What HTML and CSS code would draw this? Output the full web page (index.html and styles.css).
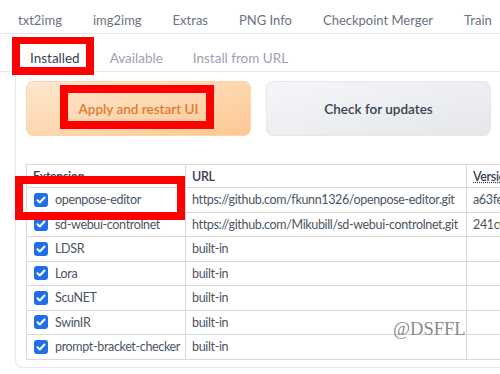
FILE: index.html
```html
<!DOCTYPE html>
<html lang="en">
<head>
    <meta charset="UTF-8">
    <meta name="viewport" content="width=device-width, initial-scale=1.0">
    <title>Extensions</title>
    <link rel="stylesheet" href="styles.css">
</head>
<body>
    <div class="top-tabs">
        <span>txt2img</span>
        <span>img2img</span>
        <span>Extras</span>
        <span>PNG Info</span>
        <span>Checkpoint Merger</span>
        <span>Train</span>
    </div>
    <div class="sub-tabs">
        <span class="tab selected">Installed</span>
        <span class="tab">Available</span>
        <span class="tab">Install from URL</span>
    </div>
    <div class="panel">
        <div class="buttons">
            <button class="btn btn-primary">Apply and restart UI</button>
            <button class="btn btn-secondary">Check for updates</button>
        </div>
        <table class="ext-table">
            <colgroup>
                <col class="col-ext">
                <col class="col-url">
                <col class="col-ver">
            </colgroup>
            <thead>
                <tr>
                    <th>Extension</th>
                    <th>URL</th>
                    <th><abbr>Version</abbr></th>
                </tr>
            </thead>
            <tbody>
                <tr>
                    <td><label><input type="checkbox" checked><span>openpose-editor</span></label></td>
                    <td>https://github.com/fkunn1326/openpose-editor.git</td>
                    <td>a63fe</td>
                </tr>
                <tr>
                    <td><label><input type="checkbox" checked><span>sd-webui-controlnet</span></label></td>
                    <td>https://github.com/Mikubill/sd-webui-controlnet.git</td>
                    <td>241c0</td>
                </tr>
                <tr>
                    <td><label><input type="checkbox" checked><span>LDSR</span></label></td>
                    <td>built-in</td>
                    <td></td>
                </tr>
                <tr>
                    <td><label><input type="checkbox" checked><span>Lora</span></label></td>
                    <td>built-in</td>
                    <td></td>
                </tr>
                <tr>
                    <td><label><input type="checkbox" checked><span>ScuNET</span></label></td>
                    <td>built-in</td>
                    <td></td>
                </tr>
                <tr>
                    <td><label><input type="checkbox" checked><span>SwinIR</span></label></td>
                    <td>built-in</td>
                    <td></td>
                </tr>
                <tr>
                    <td><label><input type="checkbox" checked><span>prompt-bracket-checker</span></label></td>
                    <td>built-in</td>
                    <td></td>
                </tr>
            </tbody>
        </table>
        <div class="watermark">@DSFFL</div>
    </div>

    <!-- red annotation boxes drawn over the screenshot -->
    <div class="mark mark-tab"></div>
    <div class="mark mark-apply"></div>
    <div class="mark mark-row"></div>
</body>
</html>
```

FILE: styles.css
```css
body {
    margin: 0;
    font-family: Lato, "Noto Sans", sans-serif;
    background-color: white;
    color: #374151;
    overflow: hidden;
}
.top-tabs {
    display: flex;
    gap: 31px;
    height: 33px;
    align-items: center;
    padding: 0 0 0 18px;
    border-bottom: 1px solid #e5e7eb;
    color: #6b7280;
    font-size: 13px;
    white-space: nowrap;
}
.top-tabs span {
    margin-top: 6px;
}
.sub-tabs {
    display: flex;
    height: 37px;
    align-items: flex-end;
    padding-left: 20px;
    border-bottom: 1px solid #e5e7eb;
    font-size: 13.5px;
    color: #9ca3af;
}
.tab {
    padding: 0 15px 4px 15px;
    line-height: 18px;
    white-space: nowrap;
}
.tab.selected {
    color: #374151;
    padding-left: 10px;
}
.panel {
    position: relative;
    margin-left: 15px;
    margin-right: -60px;
    height: 296px;
    box-sizing: border-box;
    border-left: 1px solid #e5e7eb;
    border-bottom: 1px solid #e5e7eb;
    border-bottom-left-radius: 8px;
    padding: 9px 0 0 10px;
}
.buttons {
    display: grid;
    grid-template-columns: 225px 225px;
    gap: 15px;
    height: 55px;
}
.btn {
    border-radius: 7px;
    font-family: inherit;
    font-size: 13.5px;
    font-weight: 600;
    cursor: pointer;
}
.btn-primary {
    background: linear-gradient(to bottom right, #ffe7cf, #fcc893);
    border: 1px solid #fcd5ab;
    color: #e07b32;
}
.btn-secondary {
    background: linear-gradient(to bottom right, #f5f6f8, #e5e7eb);
    border: 1px solid #e5e7eb;
    color: #374151;
}
.ext-table {
    margin-top: 28px;
    border-collapse: collapse;
    table-layout: fixed;
    width: 520px;
    font-size: 12.5px;
    letter-spacing: -0.35px;
    color: #374151;
}
.col-ext { width: 159px; }
.col-url { width: 281px; }
.col-ver { width: 80px; }
.ext-table th,
.ext-table td {
    border: 1px solid #d8d8d8;
    height: 23.5px;
    padding: 0 6px;
    text-align: left;
    white-space: nowrap;
    overflow: hidden;
}
.ext-table th {
    font-weight: 600;
    height: 22px;
}
.ext-table td {
    color: #4b5563;
}
abbr {
    text-decoration: underline dotted;
}
.ext-table label {
    display: flex;
    align-items: center;
    gap: 7px;
    margin-left: 1px;
}
.ext-table input[type="checkbox"] {
    appearance: none;
    flex: none;
    width: 14px;
    height: 14px;
    margin: 0;
    border-radius: 3px;
    background-color: #1f6feb;
    background-image: url("data:image/svg+xml,%3Csvg xmlns='http://www.w3.org/2000/svg' viewBox='0 0 14 14'%3E%3Cpath d='M3.5 7.2l2.3 2.3 4.7-5' fill='none' stroke='white' stroke-width='2' stroke-linecap='round' stroke-linejoin='round'/%3E%3C/svg%3E");
}
.watermark {
    position: absolute;
    left: 377px;
    top: 247px;
    font-family: "Liberation Serif", serif;
    font-size: 18.5px;
    color: #8a8a8a;
}
.mark {
    position: absolute;
    box-sizing: border-box;
    border: 8px solid #ff0000;
}
.mark-tab {
    left: 12px;
    top: 37px;
    width: 82px;
    height: 38px;
    border-top-width: 7px;
}
.mark-apply {
    left: 60px;
    top: 85px;
    width: 154px;
    height: 44px;
}
.mark-row {
    left: 15px;
    top: 176px;
    width: 170px;
    height: 44px;
}
```
